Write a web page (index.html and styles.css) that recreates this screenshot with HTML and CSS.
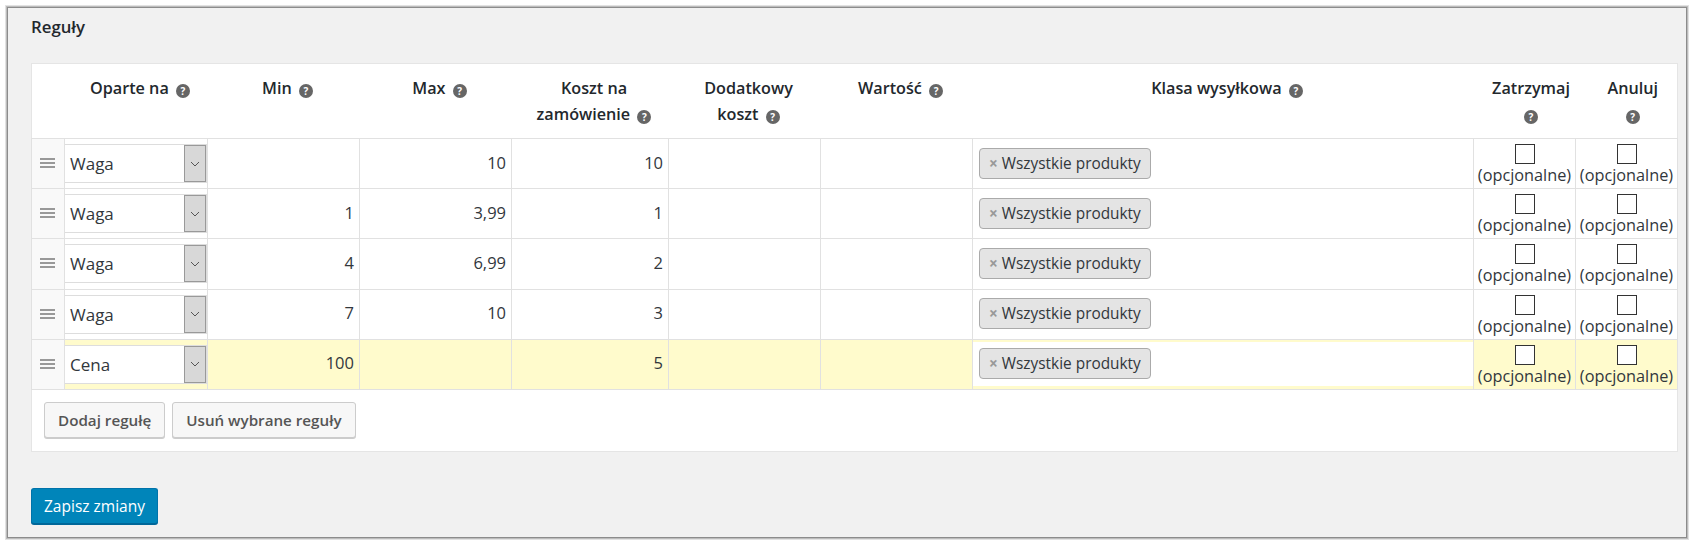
FILE: index.html
```html
<!DOCTYPE html>
<html lang="pl">
<head>
  <meta charset="utf-8">
  <title>Reguły</title>
  <link rel="stylesheet" href="styles.css">
</head>
<body>

<div class="edge edge-outer"><div class="edge edge-mid"><div class="edge edge-inner">
<div class="panel">
  <h3 class="title">Reguły</h3>

  <table class="rules">
    <colgroup>
      <col class="col-handle"><col class="col-based"><col class="col-min"><col class="col-max">
      <col class="col-order"><col class="col-extra"><col class="col-value"><col class="col-class">
      <col class="col-stop"><col class="col-cancel">
    </colgroup>
    <thead>
      <tr>
        <th></th>
        <th>Oparte na <span class="help">?</span></th>
        <th>Min <span class="help">?</span></th>
        <th>Max <span class="help">?</span></th>
        <th>Koszt na<br>zamówienie <span class="help">?</span></th>
        <th>Dodatkowy<br>koszt <span class="help">?</span></th>
        <th>Wartość <span class="help">?</span></th>
        <th>Klasa wysyłkowa <span class="help">?</span></th>
        <th class="narrow">Zatrzymaj<br><span class="help">?</span></th>
        <th class="narrow">Anuluj<br><span class="help">?</span></th>
      </tr>
    </thead>
    <tbody>
      <tr>
        <td class="handle"><span class="bars"></span></td>
        <td class="based"><div class="select"><span class="select-text">Waga</span><span class="select-arrow"><svg width="10" height="6" viewBox="0 0 10 6"><path d="M1 1l4 4 4-4" fill="none" stroke="#555"/></svg></span></div></td>
        <td class="num"></td>
        <td class="num">10</td>
        <td class="num">10</td>
        <td class="num"></td>
        <td class="num"></td>
        <td class="ship"><div class="ship-box"><span class="tag"><span class="tag-x">×</span>Wszystkie produkty</span></div></td>
        <td class="opt"><input type="checkbox"><span>(opcjonalne)</span></td>
        <td class="opt"><input type="checkbox"><span>(opcjonalne)</span></td>
      </tr>
      <tr>
        <td class="handle"><span class="bars"></span></td>
        <td class="based"><div class="select"><span class="select-text">Waga</span><span class="select-arrow"><svg width="10" height="6" viewBox="0 0 10 6"><path d="M1 1l4 4 4-4" fill="none" stroke="#555"/></svg></span></div></td>
        <td class="num">1</td>
        <td class="num">3,99</td>
        <td class="num">1</td>
        <td class="num"></td>
        <td class="num"></td>
        <td class="ship"><div class="ship-box"><span class="tag"><span class="tag-x">×</span>Wszystkie produkty</span></div></td>
        <td class="opt"><input type="checkbox"><span>(opcjonalne)</span></td>
        <td class="opt"><input type="checkbox"><span>(opcjonalne)</span></td>
      </tr>
      <tr>
        <td class="handle"><span class="bars"></span></td>
        <td class="based"><div class="select"><span class="select-text">Waga</span><span class="select-arrow"><svg width="10" height="6" viewBox="0 0 10 6"><path d="M1 1l4 4 4-4" fill="none" stroke="#555"/></svg></span></div></td>
        <td class="num">4</td>
        <td class="num">6,99</td>
        <td class="num">2</td>
        <td class="num"></td>
        <td class="num"></td>
        <td class="ship"><div class="ship-box"><span class="tag"><span class="tag-x">×</span>Wszystkie produkty</span></div></td>
        <td class="opt"><input type="checkbox"><span>(opcjonalne)</span></td>
        <td class="opt"><input type="checkbox"><span>(opcjonalne)</span></td>
      </tr>
      <tr>
        <td class="handle"><span class="bars"></span></td>
        <td class="based"><div class="select"><span class="select-text">Waga</span><span class="select-arrow"><svg width="10" height="6" viewBox="0 0 10 6"><path d="M1 1l4 4 4-4" fill="none" stroke="#555"/></svg></span></div></td>
        <td class="num">7</td>
        <td class="num">10</td>
        <td class="num">3</td>
        <td class="num"></td>
        <td class="num"></td>
        <td class="ship"><div class="ship-box"><span class="tag"><span class="tag-x">×</span>Wszystkie produkty</span></div></td>
        <td class="opt"><input type="checkbox"><span>(opcjonalne)</span></td>
        <td class="opt"><input type="checkbox"><span>(opcjonalne)</span></td>
      </tr>
      <tr class="active">
        <td class="handle"><span class="bars"></span></td>
        <td class="based"><div class="select"><span class="select-text">Cena</span><span class="select-arrow"><svg width="10" height="6" viewBox="0 0 10 6"><path d="M1 1l4 4 4-4" fill="none" stroke="#555"/></svg></span></div></td>
        <td class="num">100</td>
        <td class="num"></td>
        <td class="num">5</td>
        <td class="num"></td>
        <td class="num"></td>
        <td class="ship"><div class="ship-box"><span class="tag"><span class="tag-x">×</span>Wszystkie produkty</span></div></td>
        <td class="opt"><input type="checkbox"><span>(opcjonalne)</span></td>
        <td class="opt"><input type="checkbox"><span>(opcjonalne)</span></td>
      </tr>
    </tbody>
    <tfoot>
      <tr>
        <td colspan="10">
          <div class="actions">
            <button class="btn">Dodaj regułę</button>
            <button class="btn">Usuń wybrane reguły</button>
          </div>
        </td>
      </tr>
    </tfoot>
  </table>

  <button class="btn-primary">Zapisz zmiany</button>
</div>
</div></div></div>

</body>
</html>
```

FILE: styles.css
```css
html, body {
  background: #fff;
}
body {
  margin: 5px;
  font-family: "Open Sans", "Noto Sans", sans-serif;
  font-size: 15px;
  color: #32373c;
}

/* window shadow, fading out in three steps */
.edge {
  border: 1px solid;
}
.edge-outer { border-color: #e2e2e2; }
.edge-mid { border-color: #bcbcbc; }
.edge-inner { border-color: #8c8c8c; }

.panel {
  height: 529px;
  box-sizing: border-box;
  padding: 8px 10px 0 23px;
  background: #f1f1f1;
}
.title {
  margin: 0;
  height: 47px;
  font-size: 16.8px;
  line-height: 22px;
  font-weight: 600;
  color: #23282d;
}

/* rules table */
.rules {
  width: 1646px;
  table-layout: fixed;
  border-collapse: collapse;
  background: #fff;
  border: 1px solid #e5e5e5;
}
.col-handle { width: 33px; }
.col-based { width: 143px; }
.col-min { width: 152px; }
.col-max { width: 152px; }
.col-order { width: 157px; }
.col-extra { width: 152px; }
.col-value { width: 152px; }
.col-class { width: 501px; }
.col-stop { width: 102px; }
.col-cancel { width: 102px; }

.rules th {
  height: 75px;
  box-sizing: border-box;
  padding: 11px 4px 0 12px;
  vertical-align: top;
  text-align: center;
  font-size: 16.2px;
  line-height: 26px;
  font-weight: 600;
  color: #23282d;
  white-space: nowrap;
}
.rules th.narrow {
  padding: 11px 0 0 13px;
}
.rules thead tr {
  border-bottom: 1px solid #e1e1e1;
}
.rules tbody td {
  height: 50.2px;
  box-sizing: border-box;
  padding: 0;
  border: 1px solid #e1e1e1;
}
.active td {
  background: #fffbcc;
}
.help {
  display: inline-block;
  width: 14px;
  height: 14px;
  margin-left: 3px;
  border-radius: 50%;
  background: #666;
  color: #fff;
  font-size: 10px;
  line-height: 14px;
  font-weight: 700;
  text-align: center;
  vertical-align: -1px;
}
.narrow .help {
  margin-left: 0;
}

.rules tbody .handle {
  background: #f9f9f9;
  padding-right: 2px;
  text-align: center;
}
.bars {
  display: block;
  width: 15px;
  height: 2px;
  margin: -1px auto 0;
  background: #999;
  box-shadow: 0 4px 0 #999, 0 8px 0 #999;
  transform: translateY(-4px);
}

.based {
  background: #fff;
}
.select {
  display: flex;
  height: 39px;
  box-sizing: border-box;
  margin-left: -1px;
  background: #fff;
  border: 1px solid #ddd;
  font-size: 17px;
}
.select-text {
  flex: 1;
  padding: 2px 0 0 5px;
  line-height: 33px;
}
.select-arrow {
  display: flex;
  align-items: center;
  justify-content: center;
  width: 22px;
  background: #d8d8d8;
  border: 1px solid #999;
  box-sizing: border-box;
}

.rules tbody .num {
  padding-right: 5px;
  padding-bottom: 3px;
  text-align: right;
  font-size: 16.5px;
}

.ship-box {
  display: flex;
  align-items: center;
  height: 44px;
  box-sizing: border-box;
  padding-left: 6px;
  background: #fff;
}
.tag {
  display: inline-block;
  height: 31px;
  box-sizing: border-box;
  padding: 0 9px 0 9px;
  margin-top: -1px;
  background: #e4e4e4;
  border: 1px solid #aaa;
  border-radius: 4px;
  font-size: 15.4px;
  line-height: 29px;
}
.tag-x {
  margin-right: 4px;
  color: #999;
  font-weight: 700;
}

.rules tbody .opt {
  padding-top: 5px;
  text-align: center;
  line-height: 21px;
  font-size: 16.3px;
  vertical-align: top;
  white-space: nowrap;
}
.opt input {
  display: block;
  appearance: none;
  width: 20px;
  height: 20px;
  margin: 0 auto 1px;
  background: #fff;
  border: 1px solid #333;
  border-radius: 0;
}
.opt span {
  display: block;
  margin-left: -2px;
  margin-right: -2px;
}

.actions {
  display: flex;
  gap: 7px;
  padding: 11px 0 12px 11px;
}
.btn {
  height: 36px;
  box-sizing: border-box;
  padding: 0 13px;
  background: #f7f7f7;
  border: 1px solid #ccc;
  border-radius: 3px;
  box-shadow: 0 1px 0 #ccc;
  font: 600 15.2px "Open Sans", sans-serif;
  color: #555;
}
.btn-primary {
  display: block;
  width: 127px;
  height: 36px;
  margin-top: 36px;
  background: #0085ba;
  border: 1px solid #0073aa;
  border-bottom-color: #006799;
  border-radius: 3px;
  box-shadow: 0 1px 0 #006799;
  font: 400 15.5px "Open Sans", sans-serif;
  color: #fff;
}
```
